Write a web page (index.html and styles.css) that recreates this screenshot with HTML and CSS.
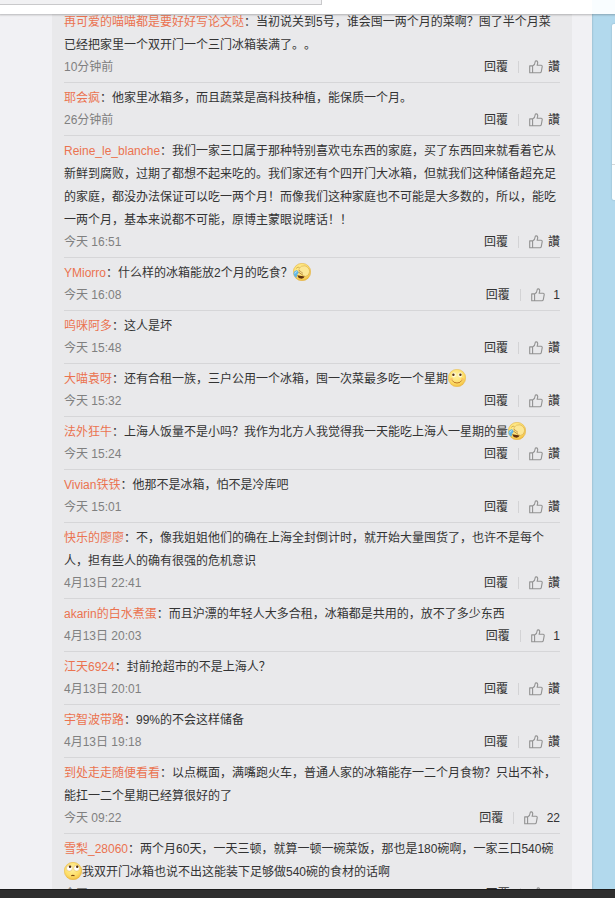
FILE: index.html
```html
<!DOCTYPE html>
<html lang="zh-CN">

<head>
    <meta charset="UTF-8">
    <meta name="viewport" content="width=device-width, initial-scale=1.0">
    <title>评论</title>
    <link rel="stylesheet" href="styles.css">
</head>

<body>
    <!-- shared icons -->
    <svg class="defs" width="0" height="0">
        <defs>
            <radialGradient id="face" cx="45%" cy="35%" r="70%">
                <stop offset="0" stop-color="#fff3a6" />
                <stop offset="0.65" stop-color="#fddd66" />
                <stop offset="1" stop-color="#efb53a" />
            </radialGradient>
        </defs>
        <symbol id="thumb" viewBox="0 0 14 14">
            <path d="M0.7 5.9h2.9v6.9H0.7zM3.6 6.1C5.5 5 6.1 3.6 6.2 1.7c0-1.2 2.3-1.3 2.5 0.7 0 1-0.2 1.9-0.6 2.9h4c0.9 0 1.2 0.7 1.1 1.3l-0.9 5c-0.2 0.8-0.6 1.2-1.3 1.2H3.6" />
        </symbol>
        <symbol id="facepalm" viewBox="0 0 18 18">
            <circle cx="9" cy="9" r="8.7" fill="url(#face)" stroke="#e0ac38" stroke-width="0.5" />
            <path d="M3.2 5.4Q5 3.4 6.6 4.4" fill="none" stroke="#b98a2c" stroke-width="0.6" />
            <path d="M4.2 12.2l7.600 1.400q-1.400 2.600-4.200 2Q5 15 4.200 12.200z" fill="#60310f" />
            <path d="M4 7Q0.800 7.800 0.400 10.400 0.800 13.600 3.400 15 3.400 12 5.800 9.400z" fill="#62b5e4" />
            <path d="M1.800 10.600Q2.200 9 3.800 8.600" fill="none" stroke="#c8ebfa" stroke-width="1" />
            <path d="M6 5.600Q8 2.200 12 2.800q4.600 1.800 4.600 6-0.600 4.200-4 4.600Q8.800 13 6.800 9.800 5.200 7.200 6 5.600z" fill="#fce794" stroke="#cf9c3a" stroke-width="0.500" />
            <path d="M6 7.200l4 3.200M5.400 9.200l4.600 2.800" fill="none" stroke="#a8742a" stroke-width="0.600" />
        </symbol>
        <symbol id="smile" viewBox="0 0 18 18">
            <circle cx="9" cy="9" r="8.7" fill="url(#face)" stroke="#e6b848" stroke-width="0.5" />
            <ellipse cx="5.800" cy="6" rx="2" ry="2.400" fill="#fffbe0" />
            <ellipse cx="12.200" cy="6" rx="2" ry="2.400" fill="#fffbe0" />
            <circle cx="5.400" cy="5.800" r="1.200" fill="#5b3310" />
            <circle cx="12.400" cy="5.800" r="1.200" fill="#5b3310" />
            <path d="M4.200 11.400Q5.600 14 9 14T13.800 11.400" fill="none" stroke="#b46a1e" stroke-width="0.900" />
            <circle cx="3.600" cy="10.200" r="1.300" fill="#f8ad63" opacity="0.600" />
            <circle cx="14.400" cy="10.200" r="1.300" fill="#f8ad63" opacity="0.600" />
        </symbol>
        <symbol id="rolleyes" viewBox="0 0 18 18">
            <circle cx="9" cy="9" r="8.7" fill="url(#face)" stroke="#e6b030" stroke-width="0.5" />
            <circle cx="5.400" cy="6.200" r="2.900" fill="#fff" stroke="#d5a13a" stroke-width="0.400" />
            <circle cx="12.600" cy="6.200" r="2.900" fill="#fff" stroke="#d5a13a" stroke-width="0.400" />
            <circle cx="6" cy="4.700" r="1.200" fill="#53300f" />
            <circle cx="13.200" cy="4.700" r="1.200" fill="#53300f" />
            <path d="M7.200 13.900q1.600-1.100 3.400 0" fill="none" stroke="#7e4812" stroke-width="1.100" />
        </symbol>
    </svg>

    <div class="topbar">
        <div class="search-box"></div>
    </div>

    <div class="page">
        <div class="main">
            <div class="comment-list">
                <div class="comment">
                    <div class="text"><a class="name">再可爱的喵喵都是要好好写论文哒</a>：当初说关到5号，谁会囤一两个月的菜啊？囤了半个月菜已经把家里一个双开门一个三门冰箱装满了。。</div>
                    <div class="meta">
                        <span class="time">10分钟前</span>
                        <a class="reply">回覆</a>
                        <a class="like"><svg class="thumb"><use href="#thumb" /></svg>讚</a>
                    </div>
                </div>
                <div class="comment">
                    <div class="text"><a class="name">耶会疯</a>：他家里冰箱多，而且蔬菜是高科技种植，能保质一个月。</div>
                    <div class="meta">
                        <span class="time">26分钟前</span>
                        <a class="reply">回覆</a>
                        <a class="like"><svg class="thumb"><use href="#thumb" /></svg>讚</a>
                    </div>
                </div>
                <div class="comment">
                    <div class="text"><a class="name">Reine_le_blanche</a>：我们一家三口属于那种特别喜欢屯东西的家庭，买了东西回来就看着它从新鲜到腐败，过期了都想不起来吃的。我们家还有个四开门大冰箱，但就我们这种储备超充足的家庭，都没办法保证可以吃一两个月！而像我们这种家庭也不可能是大多数的，所以，能吃一两个月，基本来说都不可能，原博主蒙眼说瞎话！！</div>
                    <div class="meta">
                        <span class="time">今天 16:51</span>
                        <a class="reply">回覆</a>
                        <a class="like"><svg class="thumb"><use href="#thumb" /></svg>讚</a>
                    </div>
                </div>
                <div class="comment">
                    <div class="text"><a class="name">YMiorro</a>：什么样的冰箱能放2个月的吃食？<svg class="emoji"><use href="#facepalm" /></svg></div>
                    <div class="meta">
                        <span class="time">今天 16:08</span>
                        <a class="reply">回覆</a>
                        <a class="like count"><svg class="thumb"><use href="#thumb" /></svg>1</a>
                    </div>
                </div>
                <div class="comment">
                    <div class="text"><a class="name">呜咪阿多</a>：这人是坏</div>
                    <div class="meta">
                        <span class="time">今天 15:48</span>
                        <a class="reply">回覆</a>
                        <a class="like"><svg class="thumb"><use href="#thumb" /></svg>讚</a>
                    </div>
                </div>
                <div class="comment">
                    <div class="text"><a class="name">大喵袁呀</a>：还有合租一族，三户公用一个冰箱，囤一次菜最多吃一个星期<svg class="emoji"><use href="#smile" /></svg></div>
                    <div class="meta">
                        <span class="time">今天 15:32</span>
                        <a class="reply">回覆</a>
                        <a class="like"><svg class="thumb"><use href="#thumb" /></svg>讚</a>
                    </div>
                </div>
                <div class="comment">
                    <div class="text"><a class="name">法外狂牛</a>：上海人饭量不是小吗？我作为北方人我觉得我一天能吃上海人一星期的量<svg class="emoji"><use href="#facepalm" /></svg></div>
                    <div class="meta">
                        <span class="time">今天 15:24</span>
                        <a class="reply">回覆</a>
                        <a class="like"><svg class="thumb"><use href="#thumb" /></svg>讚</a>
                    </div>
                </div>
                <div class="comment">
                    <div class="text"><a class="name">Vivian铁铁</a>：他那不是冰箱，怕不是冷库吧</div>
                    <div class="meta">
                        <span class="time">今天 15:01</span>
                        <a class="reply">回覆</a>
                        <a class="like"><svg class="thumb"><use href="#thumb" /></svg>讚</a>
                    </div>
                </div>
                <div class="comment">
                    <div class="text"><a class="name">快乐的廖廖</a>：不，像我姐姐他们的确在上海全封倒计时，就开始大量囤货了，也许不是每个人，担有些人的确有很强的危机意识</div>
                    <div class="meta">
                        <span class="time">4月13日 22:41</span>
                        <a class="reply">回覆</a>
                        <a class="like"><svg class="thumb"><use href="#thumb" /></svg>讚</a>
                    </div>
                </div>
                <div class="comment">
                    <div class="text"><a class="name">akarin的白水煮蛋</a>：而且沪漂的年轻人大多合租，冰箱都是共用的，放不了多少东西</div>
                    <div class="meta">
                        <span class="time">4月13日 20:03</span>
                        <a class="reply">回覆</a>
                        <a class="like count"><svg class="thumb"><use href="#thumb" /></svg>1</a>
                    </div>
                </div>
                <div class="comment">
                    <div class="text"><a class="name">江天6924</a>：封前抢超市的不是上海人？</div>
                    <div class="meta">
                        <span class="time">4月13日 20:01</span>
                        <a class="reply">回覆</a>
                        <a class="like"><svg class="thumb"><use href="#thumb" /></svg>讚</a>
                    </div>
                </div>
                <div class="comment">
                    <div class="text"><a class="name">宇智波带路</a>：99%的不会这样储备</div>
                    <div class="meta">
                        <span class="time">4月13日 19:18</span>
                        <a class="reply">回覆</a>
                        <a class="like"><svg class="thumb"><use href="#thumb" /></svg>讚</a>
                    </div>
                </div>
                <div class="comment">
                    <div class="text"><a class="name">到处走走随便看看</a>：以点概面，满嘴跑火车，普通人家的冰箱能存一二个月食物？只出不补，能扛一二个星期已经算很好的了</div>
                    <div class="meta">
                        <span class="time">今天 09:22</span>
                        <a class="reply">回覆</a>
                        <a class="like count"><svg class="thumb"><use href="#thumb" /></svg>22</a>
                    </div>
                </div>
                <div class="comment">
                    <div class="text"><a class="name">雪梨_28060</a>：两个月60天，一天三顿，就算一顿一碗菜饭，那也是180碗啊，一家三口540碗<svg class="emoji"><use href="#rolleyes" /></svg>我双开门冰箱也说不出这能装下足够做540碗的食材的话啊</div>
                    <div class="meta">
                        <span class="time">今天</span>
                        <a class="reply">回覆</a>
                        <a class="like count"><svg class="thumb"><use href="#thumb" /></svg>1</a>
                    </div>
                </div>
            </div>
        </div>
        <div class="side">
            <div class="side-card"></div>
        </div>
    </div>

    <div class="bottombar"></div>
</body>

</html>
```
FILE: styles.css
```css
body {
    margin: 0;
    width: 615px;
    height: 898px;
    overflow: hidden;
    display: flex;
    flex-direction: column;
    background: #b2d9ed;
    color: #333;
    font: 12px/23px "Liberation Sans", Arial, "Noto Sans CJK SC", sans-serif;
    text-spacing-trim: space-all;
}

.defs {
    position: absolute;
}

.topbar {
    position: relative;
    z-index: 2;
    flex: none;
    height: 14px;
    background: linear-gradient(to right, #fff 592px, #f9fdff 592px);
    box-shadow: 0 0 2px 1px rgba(0, 0, 0, 0.25);
}

.search-box {
    box-sizing: border-box;
    width: 322px;
    height: 5px;
    background: #f1f1f3;
    border: 1px solid #c9c9cb;
    border-width: 0 1px 1px 0;
}

.page {
    flex: 1;
    min-height: 0;
    display: flex;
    overflow: hidden;
}

.main {
    box-sizing: border-box;
    width: 592px;
    padding: 0 20px 0 52px;
    background: #f1f1f4;
    box-shadow: 0 0 2px rgba(0, 0, 0, 0.25);
}

.comment-list {
    margin-top: -7px;
    padding: 0 12px;
    background: #e9e9eb;
}

.comment {
    padding: 4px 0 5px;
    border-bottom: 1px solid #d6d6d8;
}

.name {
    color: #eb7350;
}

.emoji {
    width: 18px;
    height: 18px;
    margin: -3px 0;
    vertical-align: -1px;
}

.meta {
    display: flex;
    align-items: center;
    height: 20px;
    line-height: 20px;
}

.time {
    flex: 1;
    color: #808080;
}

.reply {
    padding-right: 10px;
}

.like {
    display: flex;
    align-items: center;
}

.like::before {
    content: "";
    width: 1px;
    height: 12px;
    margin-right: 10px;
    background: #d3d3d5;
}

.thumb {
    width: 14px;
    height: 14px;
    margin-right: 5px;
    fill: none;
    stroke: #929292;
    stroke-width: 1.1;
    stroke-linejoin: round;
}

.count .thumb {
    margin-right: 8.5px;
}

.side {
    flex: 1;
    padding: 10px 0 0 20px;
    overflow: hidden;
}

.side-card {
    width: 230px;
    height: 176px;
    border-radius: 2px;
    background: linear-gradient(#fff 140px, #d9d9d9 140px, #d9d9d9 141px, #fff 141px);
    box-shadow: 0 0 2px rgba(0, 0, 0, 0.2);
}

.bottombar {
    position: relative;
    flex: none;
    box-sizing: border-box;
    height: 9px;
    background: #2e2e2e;
    border-top: 1px solid #1c1c1c;
}
```
